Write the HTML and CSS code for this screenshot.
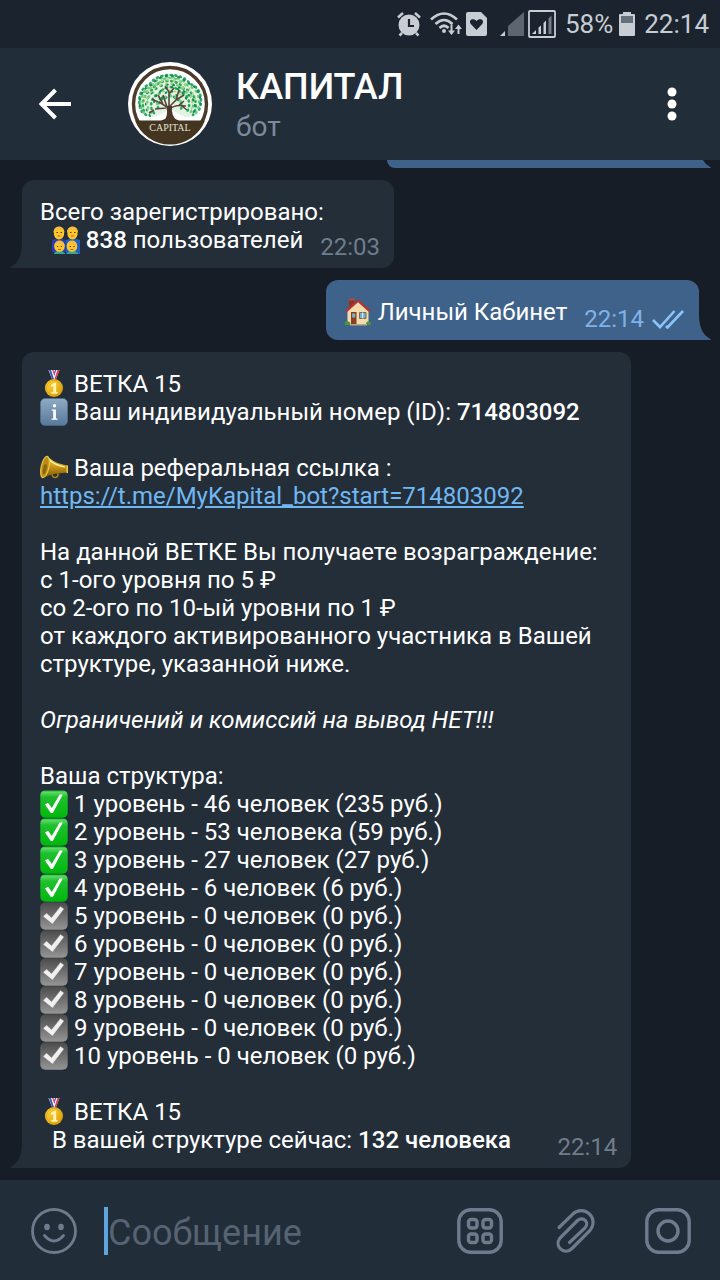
FILE: index.html
```html
<!DOCTYPE html>
<html lang="ru">
<head>
<meta charset="utf-8">
<meta name="viewport" content="width=device-width, initial-scale=1">
<title>КАПИТАЛ</title>
<link rel="stylesheet" href="styles.css">
</head>
<body>
<svg class="defs" aria-hidden="true">
  <defs>
    <linearGradient id="green" x1="0" y1="0" x2="0" y2="1"><stop offset="0" stop-color="#0d8a1d"/><stop offset=".06" stop-color="#5fdc6a"/><stop offset=".25" stop-color="#1fc02e"/><stop offset="1" stop-color="#00b70c"/></linearGradient>
    <linearGradient id="grey" x1="0" y1="0" x2="0" y2="1"><stop offset="0" stop-color="#4b4b4b"/><stop offset="1" stop-color="#959595"/></linearGradient>
    <linearGradient id="blue" x1="0" y1="0" x2="0" y2="1"><stop offset="0" stop-color="#8fabc4"/><stop offset="1" stop-color="#58799b"/></linearGradient>
    <linearGradient id="gold" x1="0" y1="0" x2="1" y2="1"><stop offset="0" stop-color="#ffd83a"/><stop offset="1" stop-color="#dc9a06"/></linearGradient>
    <linearGradient id="brass" x1="0" y1="0" x2="0" y2="1"><stop offset="0" stop-color="#f6dc62"/><stop offset=".5" stop-color="#c99616"/><stop offset="1" stop-color="#7d5608"/></linearGradient>
    <symbol id="yes" viewBox="0 0 28 28"><rect x=".3" y=".3" width="27.4" height="27.4" rx="5" fill="url(#green)"/><path d="M5 14.500 8 12.800l3.800 5.200L19.600 4.500h3.200L12.800 23h-2z" fill="#fff"/></symbol>
    <symbol id="no" viewBox="0 0 28 28"><rect x=".3" y=".3" width="27.4" height="27.4" rx="5" fill="url(#grey)"/><path d="m3 14.500 3.500-3.600 5 4.600L20.500 4.300l3.600 2.700L12.500 22.200z" fill="#f0f0f0" stroke="#6e6e6e" stroke-width=".5"/></symbol>
    <symbol id="medal" viewBox="0 0 28 28"><path d="M8.500 0h11L16 9h-4z" fill="#f4f4fa"/><path d="M9 0h2l3 9h-2zM15 0h1.300L14 6V3z" fill="#4357b8"/><path d="M17.500 0h2L16 9h-1.500zM12.200 0h1.300L15 4l-.7 1.500z" fill="#dc3c50"/><circle cx="14" cy="18" r="9" fill="url(#gold)"/><circle cx="14" cy="18" r="7.600" fill="none" stroke="#d79a0a" stroke-width=".7"/><path d="m10.500 15.500 3.300-2.700h2.400V22h1.300v1.800h-6V22h1.700v-6l-1.700 1z" fill="#fff3b0"/></symbol>
    <symbol id="info" viewBox="0 0 28 28"><rect x=".4" y=".4" width="27.200" height="27.200" rx="5" fill="url(#blue)" stroke="#53718e" stroke-width=".6"/><circle cx="14.500" cy="7.700" r="1.700" fill="#fff"/><path d="M11.700 11.500h4.200v9h1.600v1.300h-6v-1.300h1.700v-7.700h-1.500z" fill="#fff"/></symbol>
    <symbol id="horn" viewBox="0 0 28 28"><path d="M12 20c0 3 2 3.800 4 3.300 1.700-.5 2.300-2 2-4" fill="none" stroke="#b5860f" stroke-width="1.500"/><path d="M7.500 2.500C12 7 19 10 27 11.500v7L18 19.500c-5 .4-9.500 1.800-13.500 4z" fill="url(#brass)"/><path d="M8 4.500c5 5.500 11 7.500 17 8.500" fill="none" stroke="#fff0a0" stroke-width="1.200"/><ellipse cx="5" cy="13" rx="3.800" ry="10.800" transform="rotate(12 5 13)" fill="#b98a16" stroke="#e9c644" stroke-width="1.200"/><ellipse cx="4.800" cy="15" rx="1.700" ry="5" transform="rotate(12 4.800 15)" fill="#8a6410"/><path d="M26.500 11 28 11.500v7.500l-1.500.3z" fill="#edc94b"/></symbol>
    <symbol id="house" viewBox="0 0 28 28"><path d="M5 1h5v8H5z" fill="#8e3227"/><path d="M4.500.5h6v2h-6z" fill="#b5493a"/><path d="M3.500 12 14 3l10.500 9v14h-21z" fill="#f1dcae"/><path d="M1 13 14 1.200 27 13l-1.500 1.500L14 4.300 2.500 14.500z" fill="#b8322e"/><path d="M7 14h5.500v12H7z" fill="#8b3e22"/><path d="M8.200 15.500h3v4h-3z" fill="#70b7d8"/><path d="M15.500 14.500h6.500v6h-6.500z" fill="#5eb2e4" stroke="#91623a"/><path d="M18.700 14.500v6" stroke="#eaf6fb"/><path d="M1 24.500q2-2.500 5 0l.8 2.500H1zM22 25q2-3.500 5 0v2h-5z" fill="#4c9a35"/><path d="M6 26h17v1.500H6z" fill="#b6a68d"/></symbol>
    <symbol id="family" viewBox="0 0 28 28"><path d="M0 14q7-3 14 0v12H0z" fill="#273cb0"/><path d="M14 14q7-3 14 0v14H14z" fill="#1e5fc4"/><path d="M2 27q5-5 11 0v1H2zM15 27q5-5 11 0v1H15z" fill="#35a792"/><g fill="#ffc629"><path d="M2 4h10v5q-1 4-5 4.500Q3 13 2 9zM15.500 4h10v5q-1 4-5 4.500-4-.5-5-4.500z"/><circle cx="7.500" cy="20.500" r="5.300"/><circle cx="20" cy="20.500" r="5.300"/></g><g fill="#f6bd45"><path d="M1.500 7C1-1.800 13-1.800 12.500 7L10.500 4h-7z"/><path d="M15 7C14.500-1.800 26.500-1.800 26 7L24 4h-7z"/><path d="M2.300 20C2 12.500 13 12.500 12.700 20L11 17.700H4z"/><path d="M14.800 20c-.3-7.500 10.700-7.500 10.400 0l-1.700-2.300h-7z"/></g><path d="M4.500 6.500h1.500m2.500 0h1.500m8 0h1.500m2.500 0H23.500M5 20.500h1.200m2.500 0h1.200m7.800 0h1.200m2.500 0h1.200" stroke="#55351b" stroke-width="1.200"/><path d="M5.500 10h3m10.500 0h3M6 23.500h3m9.500 0h3" stroke="#b56425"/></symbol>
    <symbol id="tail" viewBox="0 0 14 26"><path d="M14 0v26H.5q-1-.8 1-1.600Q12 19 12 0z"/></symbol>
  </defs>
</svg>
<div class="app">
  <div class="status">
    <svg class="alarm" viewBox="0 0 24 26" width="24" height="26"><circle cx="12" cy="14" r="10.500" fill="#c8ccd3"/><path d="M1 6.500 6 2M23 6.500 18 2M5 22l-2.500 2.500M19 22l2.500 2.500" stroke="#c8ccd3" stroke-width="2.500"/><path d="M12 8v7h5" fill="none" stroke="#1b242e" stroke-width="2.200"/></svg>
    <svg class="wifi" viewBox="0 0 32 26" width="32" height="26" fill="none" stroke="#c8ccd3" stroke-width="2.600"><path d="M1 8.500Q14-3.500 27 8.500M5.500 13Q14 5 22.500 13M9.500 17Q14 12.500 18.500 17"/><circle cx="14" cy="20" r="2" fill="#c8ccd3" stroke="none"/><path d="M21.500 13.500v9M28.500 23v-7" stroke-width="2"/><path d="m18 19.500 3.500 4.500 3.500-4.500zM25 18l3.500-4.500L32 18z" fill="#c8ccd3" stroke="none"/></svg>
    <svg class="heart" viewBox="0 0 21 26" width="21" height="26"><path d="M2 1h13l6 6v16q0 2-2 2H2q-2 0-2-2V3q0-2 2-2z" fill="#c8ccd3"/><path d="M10.500 19 5 13.300C1.500 8.500 8 6.500 10.500 10 13 6.500 19.500 8.500 16 13.300z" fill="#1b242e"/></svg>
    <svg class="sim" viewBox="0 0 24 26" width="24" height="26"><path d="M24 1v24H8V15z" fill="#5d6670"/><path d="M5 20v5H0z" fill="#c8ccd3"/></svg>
    <svg class="signal" viewBox="0 0 28 28" width="28" height="28"><rect x="1" y="1" width="26" height="26" rx="1" fill="none" stroke="#c8ccd3" stroke-width="1.800"/><path d="M8 20v4H4zM10.500 17.500l2.500-2V24h-2.500zM15.500 13l2.500-2.500V24h-2.500z" fill="#c8ccd3"/><path d="m20.500 8.500 3-3V24h-3z" fill="#747c86"/></svg>
    <span class="charge">58%</span>
    <svg class="battery" viewBox="0 0 16 26" width="16" height="26"><path d="M4 1h8v2h3q1 0 1 1v20q0 1-1 1H1q-1 0-1-1V4q0-1 1-1h3z" fill="#c8ccd3"/><path d="M2 5h12v7H2z" fill="#66707a"/></svg>
    <span>22:14</span>
  </div>
  <header class="head">
    <button class="icon back" aria-label="Назад"><svg viewBox="0 0 34 32" width="34" height="32" fill="none" stroke="#fff" stroke-width="4"><path d="M33 16H4M17.500 2 3.500 16l14 14"/></svg></button>
    <svg class="avatar" viewBox="0 0 84 84" width="84" height="84" role="img" aria-label="Capital">
      <circle cx="42" cy="42" r="42" fill="#fff"/><circle cx="42" cy="42" r="36.500" fill="#fff" stroke="#4a3b2a" stroke-width="3.400"/>
      <path d="M7 58.500h26q5-2.500 9-2.500t9 2.500h26A37.500 37.500 0 0 1 7 58.500z" fill="#43351f"/>
      <path d="M12 48C8 34 14 24 24 21 31 9 53 9 60 21c11 3 16 13 12 27-5 7-13 9-19 5l-8-4h-6l-8 4c-6 4-14 2-19-5z" fill="#e3f3e2"/>
      <g fill="none" stroke-linecap="round">
        <path stroke="#2fa866" stroke-width="2.600" stroke-dasharray="1 3.700" d="M14 50C8 40 12 25 22 22 29 10 55 10 62 22c11 3 14 18 8 28M18 53c-6-8-3-22 6-25 6-12 26-12 32-1 11 2 15 17 9 26M26 51c-6-6-2-18 5-19 5-9 17-9 22-1 8 1 11 13 5 20M30 46c0-6 3-10 7-9 3-5 8-4 11 0 4 1 7 5 5 10"/>
        <path stroke="#6cc98a" stroke-width="2.300" stroke-dasharray="1 4.600" d="M16 51C9 42 13 28 23 25 29 12 53 12 60 24c11 2 14 18 8 27M23 51c-7-8-3-19 3-21 6-11 25-11 31 0 8 2 11 13 5 21M29 42c0-9 21-12 26 1M14 34c5-8 13-9 22-17 9-4 18 3 24 8"/>
        <path stroke="#108c4e" stroke-width="2" stroke-dasharray="1 5.200" d="M12 44C10 34 17 24 24 23 31 11 51 11 59 21c11 2 16 16 12 26M22 54c-6-8-5-17 1-22 8-13 28-12 35 0 9 3 12 14 5 22M34 36c4-9 12-9 16 0M26 40c1-7 7-14 17-15 9 1 15 8 16 15"/>
        <path stroke="#a9d66f" stroke-width="1.700" stroke-dasharray="1 5" d="M20 48c-5-14 6-25 22-27 15 1 26 14 21 28M15 41c0-10 12-23 27-23 14 0 25 11 26 24M30 33c8-7 17-6 24 1"/>
      </g>
      <path d="M39 58c2-6 1-10 0-13l-8-5m7 6-11 1m3-7-6-3m11 5-5-9m9 12-4-12m-9 15-5 3m20-4V30l-4-6m4 8 5-6m-5 19 7-7 3-10m-3 10 8-5m-15 15c4-5 11-5 17-4m-8 0 6-5m-2 5 5 4" fill="none" stroke="#5b463a" stroke-width="1.600"/><path d="M36 58.500q4-3 3-14.500h5q-1 10 5 14.500z" fill="#4a3728"/>
      <text x="42" y="69" class="brand" text-anchor="middle">CAPITAL</text>
    </svg>
    <div class="who"><h1>КАПИТАЛ</h1><p>бот</p></div>
    <button class="icon more" aria-label="Меню"><svg viewBox="0 0 10 34" width="10" height="34" fill="#fff"><circle cx="5" cy="5" r="4.500"/><circle cx="5" cy="17" r="4.500"/><circle cx="5" cy="29" r="4.500"/></svg></button>
  </header>
  <main class="chat">
    <div class="bubble out clipped"><svg class="tail"><use href="#tail"/></svg></div>
    <article class="bubble in"><svg class="tail"><use href="#tail"/></svg>
      <p>Всего зарегистрировано:</p>
      <div class="last"><p>&nbsp; <svg class="emoji"><use href="#family"/></svg> <b>838</b> пользователей</p><time>22:03</time></div>
    </article>
    <article class="bubble out"><svg class="tail"><use href="#tail"/></svg>
      <div class="last"><p><svg class="emoji"><use href="#house"/></svg> Личный Кабинет</p><time>22:14 <svg class="ticks" viewBox="0 0 32 20" width="32" height="20" fill="none" stroke="#8ac4fb" stroke-width="2.600"><path d="m1 11 7 7L22.500 2M14 17l1.500 1.500L31 2"/></svg></time></div>
    </article>
    <article class="bubble in"><svg class="tail"><use href="#tail"/></svg>
      <p><svg class="emoji"><use href="#medal"/></svg> ВЕТКА 15<br>
      <svg class="emoji"><use href="#info"/></svg> Ваш индивидуальный номер (ID): <b>714803092</b></p>
      <p class="para"><svg class="emoji"><use href="#horn"/></svg> Ваша реферальная ссылка :<br>
      <a href="https://t.me/MyKapital_bot?start=714803092">https://t.me/MyKapital_bot?start=714803092</a></p>
      <p class="para">На данной ВЕТКЕ Вы получаете возраграждение:<br>
      с 1-ого уровня по 5 ₽<br>
      со 2-ого по 10-ый уровни по 1 ₽<br>
      от каждого активированного участника в Вашей структуре, указанной ниже.</p>
      <p class="para"><i>Ограничений и комиссий на вывод НЕТ!!!</i></p>
      <p class="para">Ваша структура:</p>
      <ul>
        <li><svg class="emoji"><use href="#yes"/></svg> 1 уровень - 46 человек (235 руб.)</li>
        <li><svg class="emoji"><use href="#yes"/></svg> 2 уровень - 53 человека (59 руб.)</li>
        <li><svg class="emoji"><use href="#yes"/></svg> 3 уровень - 27 человек (27 руб.)</li>
        <li><svg class="emoji"><use href="#yes"/></svg> 4 уровень - 6 человек (6 руб.)</li>
        <li><svg class="emoji"><use href="#no"/></svg> 5 уровень - 0 человек (0 руб.)</li>
        <li><svg class="emoji"><use href="#no"/></svg> 6 уровень - 0 человек (0 руб.)</li>
        <li><svg class="emoji"><use href="#no"/></svg> 7 уровень - 0 человек (0 руб.)</li>
        <li><svg class="emoji"><use href="#no"/></svg> 8 уровень - 0 человек (0 руб.)</li>
        <li><svg class="emoji"><use href="#no"/></svg> 9 уровень - 0 человек (0 руб.)</li>
        <li><svg class="emoji"><use href="#no"/></svg> 10 уровень - 0 человек (0 руб.)</li>
      </ul>
      <p class="para"><svg class="emoji"><use href="#medal"/></svg> ВЕТКА 15</p>
      <div class="last"><p>&nbsp; В вашей структуре сейчас: <b>132 человека</b></p><time>22:14</time></div>
    </article>
  </main>
  <form class="composer">
    <button type="button" class="icon" aria-label="Эмодзи"><svg viewBox="0 0 48 48" width="48" height="48" fill="none" stroke="#6d7b8d" stroke-width="2.800"><circle cx="24" cy="24" r="21.500"/><path d="M14.500 28.500q9.500 11 19 0" stroke-linecap="round"/><ellipse cx="17" cy="20" rx="2.800" ry="3.300" fill="#6d7b8d" stroke="none"/><ellipse cx="31" cy="20" rx="2.800" ry="3.300" fill="#6d7b8d" stroke="none"/></svg></button>
    <input class="message" type="text" placeholder="Сообщение" aria-label="Сообщение">
    <div class="tools">
    <button type="button" class="icon" aria-label="Команды"><svg viewBox="0 0 48 48" width="48" height="48" fill="none" stroke="#6d7b8d" stroke-width="3.400"><rect x="2.800" y="2.800" width="42.400" height="42.400" rx="12"/><g stroke-width="3.400"><rect x="12.500" y="12.500" width="8.500" height="8.500" rx="2.500"/><rect x="27" y="12.500" width="8.500" height="8.500" rx="2.500"/><rect x="12.500" y="27" width="8.500" height="8.500" rx="2.500"/><rect x="27" y="27" width="8.500" height="8.500" rx="2.500"/></g></svg></button>
    <button type="button" class="icon" aria-label="Прикрепить"><svg viewBox="-2 0 48 48" width="48" height="48" fill="none" stroke="#6d7b8d" stroke-width="3.200" stroke-linecap="round"><path d="M7 20.500 21 6.800c10.500-9.500 27.500 4 16.500 17.200L20 41.500c-7 7-18.500-1.500-12-10.500l17.500-17.500c5.500-4.500 12.500 1.500 7.500 7.500L17.500 35.500"/></svg></button>
    <button type="button" class="icon" aria-label="Камера"><svg viewBox="0 0 48 48" width="48" height="48" fill="none" stroke="#6d7b8d" stroke-width="3.400"><rect x="2.800" y="2.800" width="42.400" height="42.400" rx="12"/><circle cx="24" cy="24" r="10"/></svg></button>
    </div>
  </form>
</div>
</body>
</html>
```

FILE: styles.css
```css
* { box-sizing: border-box; }
body { margin: 0; background: #161d26; color: #fff; font: 24px/28px Roboto, "Noto Sans", sans-serif; }
p, h1, ul { margin: 0; padding: 0; }
svg { flex: none; }
b { font-weight: 500; }
.defs { position: absolute; width: 0; height: 0; }
.app { display: flex; flex-direction: column; min-height: 100vh; }
.status { display: flex; align-items: center; justify-content: flex-end; height: 48px; padding-right: 11px; background: #1b242e; color: #c8ccd3; font-size: 26px; }
.wifi { margin-left: 9px; }
.heart { margin-left: 4px; }
.sim { margin-left: 13px; }
.signal { margin-left: 4px; }
.charge { margin-left: 9px; }
.battery { margin: 0 9px 0 6px; }
.head { display: flex; align-items: center; height: 112px; padding: 0 36px 0 38px; background: #222d3a; position: relative; z-index: 1; }
.icon { display: flex; align-items: center; justify-content: center; padding: 0; border: 0; background: none; }
.avatar { margin-left: 56px; }
.brand { fill: #e6e1d6; font: 10px "Liberation Serif", serif; }
.who { flex: 1; margin-left: 24px; padding-top: 5px; }
.who h1 { font-size: 36px; line-height: 40px; font-weight: 500; }
.who p { font-size: 28px; line-height: 40px; color: #7d8b9b; }
.more { width: 24px; }
.chat { flex: 1; display: flex; flex-direction: column; align-items: flex-start; gap: 12px; padding: 0 21px 12px 22px; }
.bubble { position: relative; max-width: 90%; padding: 18px 14px 7px 18px; border-radius: 12px; color: #fff; }
.in { background: #232e39; fill: #232e39; border-bottom-left-radius: 0; }
.out { align-self: flex-end; background: #3f628b; fill: #3f628b; border-bottom-right-radius: 0; }
.clipped { width: 312px; height: 8px; padding: 0; border-radius: 0 0 0 10px; clip-path: inset(0 -12px 0 0); }
.tail { position: absolute; bottom: 0; width: 14px; height: 26px; }
.in .tail { left: -12px; }
.out .tail { right: -12px; transform: scaleX(-1); }
.last { display: flex; justify-content: space-between; gap: 17px; }
time { display: flex; align-items: center; gap: 8px; padding-top: 7px; color: #6f7d8b; white-space: nowrap; }
.out time { color: #7fb3e8; }
.out.bubble { padding-right: 15px; }
.emoji { width: 28px; height: 28px; vertical-align: top; }
.para { padding-top: 28px; }
ul { list-style: none; }
a { color: #70b8f3; text-decoration: underline; }
.composer { display: flex; align-items: center; height: 100px; padding: 2px 28px 0 30px; background: #222d3a; }
.message { flex: 1; min-width: 0; height: 48px; margin-left: 26px; padding: 4px 0 0; border: 0; border-left: 4px solid #5ea5dd; border-radius: 0; outline: 0; background: none; color: #fff; font: 36px/44px Roboto, "Noto Sans", sans-serif; }
.message::placeholder { color: #566372; opacity: 1; }
.tools { display: flex; gap: 46px; }
```
